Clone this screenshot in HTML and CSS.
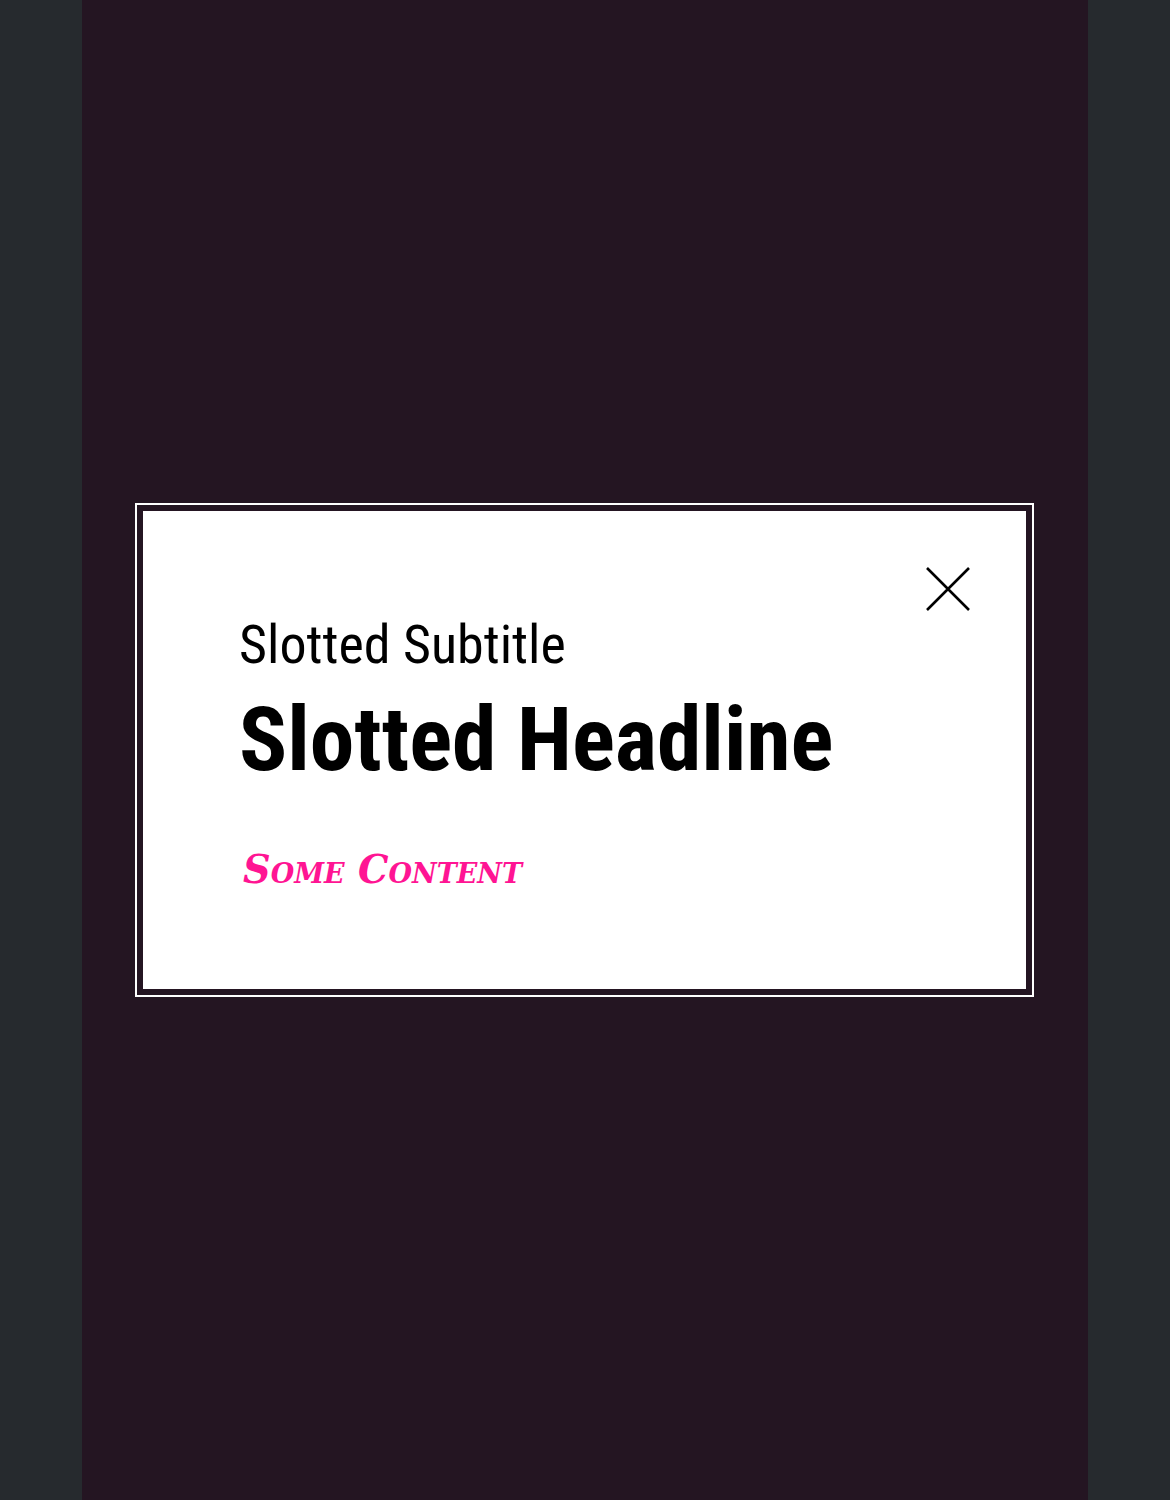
FILE: index.html
```html
<!DOCTYPE html>
<html lang="en">
<head>
<meta charset="utf-8">
<title>Modal</title>
<link rel="stylesheet" href="styles.css">
</head>
<body>
<div class="stage">
  <div class="column">
    <div class="modal" role="dialog" aria-modal="true">
      <button class="close" aria-label="Close">
        <svg viewBox="0 0 44 44" width="44" height="44"><path d="M1 1 L43 43 M43 1 L1 43" stroke="#000" stroke-width="2.6" fill="none"/></svg>
      </button>
      <div class="header">
        <p class="subtitle">Slotted Subtitle</p>
        <h2 class="headline">Slotted Headline</h2>
      </div>
      <div class="content">Some Content</div>
    </div>
  </div>
</div>
</body>
</html>
```

FILE: styles.css
```css
html, body {
  margin: 0;
  padding: 0;
  height: 100%;
}
body {
  background: #262a2e;
}
.stage {
  display: flex;
  justify-content: center;
  height: 1500px;
}
.column {
  box-sizing: border-box;
  width: 1006px;
  height: 100%;
  background: #241522;
  display: flex;
  align-items: center;
  justify-content: flex-start;
  padding-left: 61px;
}
.modal {
  position: relative;
  box-sizing: border-box;
  width: 883px;
  height: 478px;
  background: #fff;
  box-shadow: 0 0 0 6px #241522, 0 0 0 8px #fff;
  padding: 104px 96px 0 96px;
}
.close {
  position: absolute;
  top: 56px;
  right: 56px;
  width: 44px;
  height: 44px;
  padding: 0;
  border: 0;
  background: transparent;
  display: block;
}
.close svg { display: block; }
.subtitle {
  margin: 0;
  font-family: "Roboto Condensed", "Roboto", sans-serif;
  font-size: 54px;
  line-height: 60px;
  color: #000;
}
.headline {
  margin: 17px 0 0;
  font-family: "Roboto Condensed", "Roboto", sans-serif;
  font-weight: 700;
  font-size: 89.5px;
  line-height: 96px;
  color: #000;
  white-space: nowrap;
}
.content {
  margin: 60px 0 0 4px;
  font-family: "DejaVu Serif", serif;
  font-style: italic;
  font-weight: 700;
  font-variant: small-caps;
  font-size: 38.3px;
  line-height: 44px;
  color: #ff1493;
}
```
